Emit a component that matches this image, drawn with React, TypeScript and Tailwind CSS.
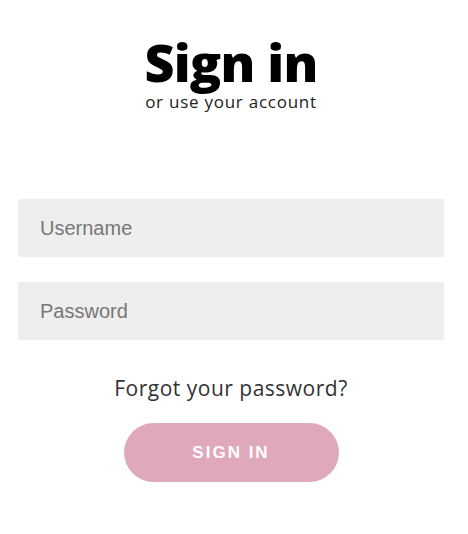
export default function App() {
  return (
    <div className="w-[468px] h-[534px] bg-white flex flex-col items-center pl-[18px] pr-[24px]" style={{ fontFamily: "'Open Sans', sans-serif" }}>
      <h1 className="mt-[36px] text-[52px] leading-[52px] font-extrabold text-black tracking-[-0.8px]">Sign in</h1>
      <p className="mt-[4px] text-[17px] leading-[20px] text-[#222] tracking-[0.75px]">or use your account</p>
      <div className="mt-[87px] w-full flex flex-col gap-[25px]" style={{ fontFamily: "'Liberation Sans', Arial, sans-serif" }}>
        <input
          placeholder="Username"
          className="h-[58px] w-full rounded-[2px] bg-[#eeeeee] pl-[22px] text-[20px] text-[#333] placeholder:text-[#777] outline-none"
        />
        <input
          placeholder="Password"
          type="password"
          className="h-[58px] w-full rounded-[2px] bg-[#eeeeee] pl-[22px] text-[20px] text-[#333] placeholder:text-[#777] outline-none"
        />
      </div>
      <a className="mt-[34px] text-[21px] leading-[28px] text-[#333] tracking-[0.5px]">Forgot your password?</a>
      <button
        className="mt-[21px] w-[215px] h-[59px] rounded-full bg-[#e0a9bb] text-white text-[17px] font-bold tracking-[2px]"
        style={{ fontFamily: "'Liberation Sans', Arial, sans-serif" }}
      >
        SIGN IN
      </button>
    </div>
  );
}
